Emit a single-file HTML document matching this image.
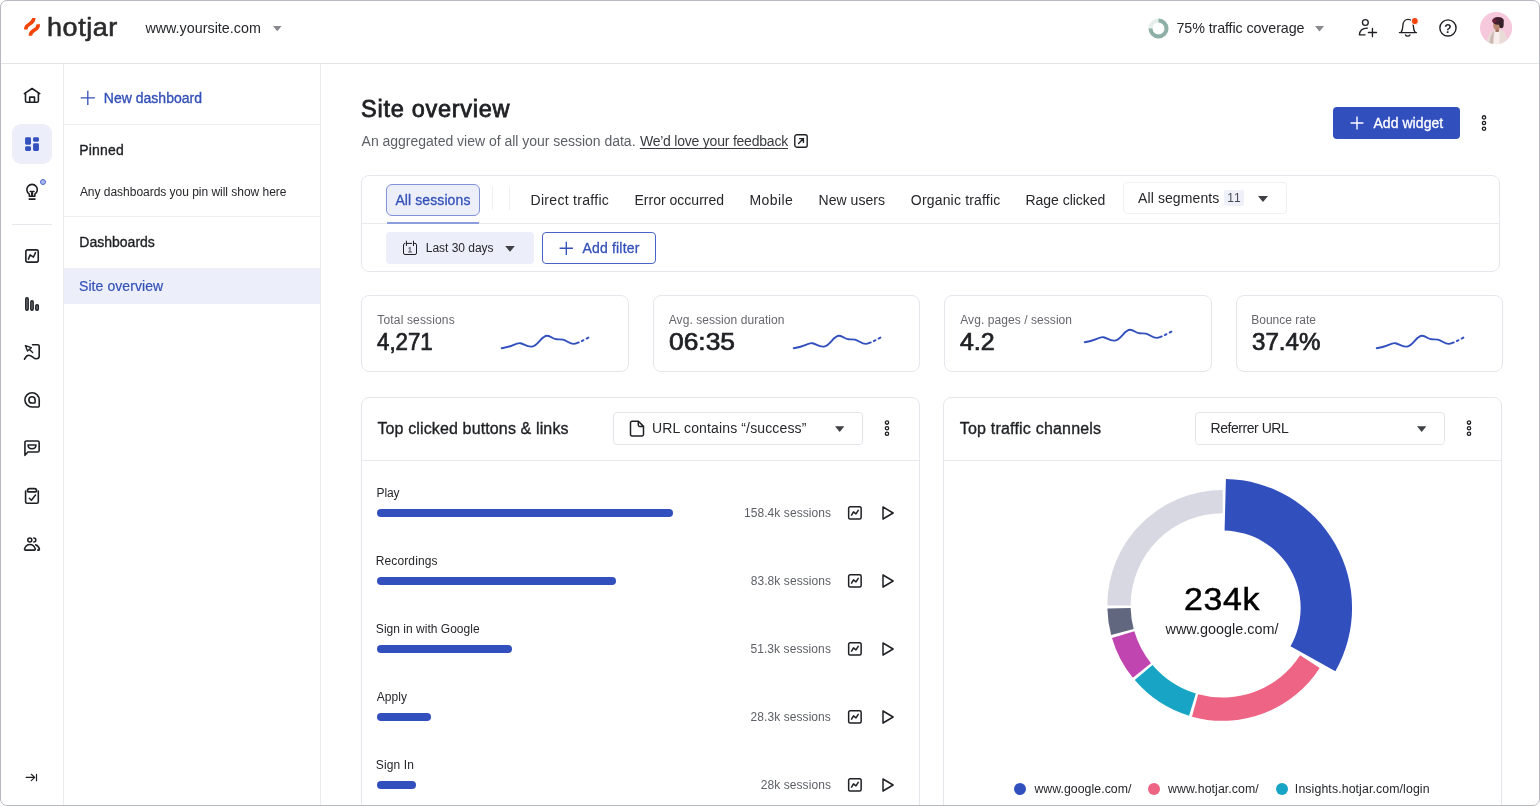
<!DOCTYPE html>
<html lang="en">
<head>
<meta charset="utf-8">
<title>Hotjar – Site overview</title>
<style>
*{box-sizing:border-box;margin:0;padding:0}
html,body{width:1540px;height:806px;overflow:hidden;background:#fff}
body{font-family:"Liberation Sans",sans-serif;color:#1f2024;font-size:14px;position:relative}
.abs{position:absolute}
.t{position:absolute;white-space:nowrap;line-height:1}
#frame{position:absolute;left:0;top:0;width:1540px;height:806px;border:1px solid #b7b8c2;border-radius:7px;pointer-events:none;z-index:50}
.hline{position:absolute;height:1px;background:#e5e6ea}
.vline{position:absolute;width:1px;background:#e9eaee}
.card{position:absolute;border:1px solid #e4e7eb;border-radius:8px;background:#fff}
svg{position:absolute;overflow:visible}
.ic{fill:none;stroke:#1f2024;stroke-linecap:round;stroke-linejoin:round}
.blue{color:#3451b8}
.grey{color:#5d5f66}
.bar{position:absolute;height:8px;border-radius:4px;background:#324fbe;left:376.700px}
.lbl{font-size:12px;color:#26272b}
.tab{font-size:14px;color:#26272b}
.st{font-size:12px;color:#66676d}
.num{font-size:23px;color:#1f2024;transform-origin:0 50%;-webkit-text-stroke:0.7px #1f2024}
.wt{font-size:16px;color:#1f2024;-webkit-text-stroke:0.35px #1f2024}
.lg{font-size:12.3px;color:#26272b}
.ses{font-size:12px;color:#5d5f66}
</style>
</head>
<body>
<div id="wrap" style="position:absolute;left:0;top:0;width:1540px;height:806px;will-change:transform">
<!-- HEADER -->
<div class="hline" style="left:0;top:63px;width:1540px"></div>
<svg style="left:23px;top:17px" width="18" height="20" viewBox="0 0 18 20"><g fill="none" stroke="#f4440b" stroke-width="3.6" stroke-linecap="butt"><path d="M2.7 12.4 C2.7 5.6 10.8 8.4 10.8 1"/><path d="M7.4 18.7 C7.4 11.800 15.3 14.600 15.3 7.200"/></g></svg>
<div class="t" id="logo" style="left:46.7px;top:15.6px;font-size:24px;letter-spacing:0.5px;transform:scale(1.1245,1.045);transform-origin:0 84.6%;color:#2b2b2d;-webkit-text-stroke:0.55px #2b2b2d">hotjar</div>
<div class="t" id="site" style="left:145.39px;top:20.60px;font-size:14.3px;color:#26272b;letter-spacing:0.015px">www.yoursite.com</div>
<svg style="left:272.800px;top:26px" width="8.600" height="5.400" viewBox="0 0 10 6"><path d="M0 0h10L5 6z" fill="#88898f"/></svg>
<svg style="left:1148px;top:18px" width="21" height="21" viewBox="0 0 21 21"><circle cx="10.5" cy="10.5" r="8" fill="none" stroke="#e4efec" stroke-width="4"/><path d="M10.5 2.5 A8 8 0 1 1 2.5 10.5" fill="none" stroke="#8fb0a8" stroke-width="4"/></svg>
<div class="t" id="cov" style="left:1176.54px;top:21.15px;font-size:14.3px;color:#26272b;letter-spacing:-0.113px">75% traffic coverage</div>
<svg style="left:1315.300px;top:26px" width="9" height="5.400" viewBox="0 0 10 6"><path d="M0 0h10L5 6z" fill="#88898f"/></svg>
<svg style="left:1357px;top:18px" width="21" height="21" viewBox="0 0 21 21" class="ic" stroke-width="1.35"><circle cx="8.350" cy="4.500" r="2.900"/><path d="M10.500 10.100 C5.200 10 2.700 12.800 2.400 16.800 H8.100"/><path d="M15.450 10.400v8.100M11.400 14.450h8.100"/></svg>
<svg style="left:1398px;top:17px" width="21" height="23" viewBox="0 0 21 23" class="ic" stroke-width="1.35"><path d="M1.400 15.600 H18.500 M3.100 15.400 C4.500 13.400 4.800 11 4.900 8.500 C5 4.600 7.400 2.300 10.100 2.300 C12.800 2.300 15.200 4.600 15.300 8.500 C15.400 11 15.700 13.400 17.100 15.400"/><path d="M7.500 17.900 C8.200 19.500 11.200 19.500 11.900 17.900"/><circle cx="16.850" cy="4.070" r="3.600" fill="#f4440b" stroke="#fff" stroke-width="1"/></svg>
<svg style="left:1438px;top:18px" width="20" height="20" viewBox="0 0 20 20"><circle cx="9.970" cy="9.930" r="8.100" fill="none" stroke="#1f2024" stroke-width="1.400"/><text x="10" y="14.700" text-anchor="middle" font-family="Liberation Sans, sans-serif" font-weight="700" font-size="12" fill="#1f2024">?</text></svg>
<svg style="left:1479.700px;top:11.700px" width="32.200" height="32.200" viewBox="0 0 32 32"><defs><clipPath id="av"><circle cx="16" cy="16" r="16"/></clipPath></defs><g clip-path="url(#av)"><rect width="32" height="32" fill="#f6c8dc"/><path d="M6.600 32 C7 24.500 10.500 19 14.800 17.600 L20.800 17.600 C25 19 27.200 24.500 27.600 32 Z" fill="#e9dcd7"/><path d="M14.600 19.500 L19.600 19.500 L19.200 32 L13.600 32 Z" fill="#f9eeee"/><path d="M9.500 32 C9.500 26 11.500 21 14 19 L12.800 32 Z" fill="#cbb9b4"/><rect x="15.400" y="15" width="3.400" height="4.800" fill="#a06f5e"/><ellipse cx="16.700" cy="13.300" rx="3.500" ry="4.200" fill="#bb8873"/><ellipse cx="18" cy="8.800" rx="5.700" ry="3.900" fill="#40202c"/><ellipse cx="21.300" cy="12" rx="2.300" ry="4.200" fill="#35202a"/><ellipse cx="14.400" cy="8.600" rx="2.200" ry="2" fill="#6a2138"/></g></svg>
<!-- LEFT RAIL -->
<div class="vline" style="left:63px;top:64px;height:742px"></div>
<div class="abs" style="left:12px;top:124px;width:40px;height:40px;border-radius:9px;background:#eceffa"></div>
<div class="hline" style="left:12px;top:224px;width:40px;background:#e8e9ee"></div>
<!-- home -->
<svg style="left:22px;top:86px" width="20" height="20" viewBox="0 0 20 20" class="ic" stroke-width="1.6" stroke="#1f2238"><path d="M2.400 7.600 L10.080 2.500 L17.760 7.600"/><path d="M3.500 7.200 V14.800 a1.500 1.500 0 0 0 1.500 1.500 H14.900 a1.500 1.500 0 0 0 1.500-1.500 V7.200"/><path d="M7.700 16.200 V11.100 H12.500 V16.200"/></svg>
<!-- dashboards -->
<svg style="left:22px;top:134px" width="20" height="20" viewBox="0 0 20 20" fill="#3350be"><rect x="3.100" y="3.200" width="5.900" height="7.500" rx="1.350"/><rect x="11.100" y="3.200" width="5.850" height="4.500" rx="1.350"/><rect x="3.100" y="12.200" width="5.900" height="4.750" rx="1.350"/><rect x="11.100" y="9.200" width="5.850" height="7.750" rx="1.350"/></svg>
<!-- bulb -->
<svg style="left:22px;top:181px" width="20" height="22" viewBox="0 0 20 22" class="ic" stroke-width="1.6"><path d="M7.300 15.300 V13.100 A5.250 5.250 0 1 1 12.860 13.100 V15.300 Z"/><path d="M7.200 18.100h5.800"/><path d="M8.200 10.600 h3.800 M10.080 10.800 V15" stroke-width="1.500"/><path d="M10.080 11.500 V15" stroke-width="2.200" stroke-linecap="butt"/></svg>
<div class="abs" style="left:39.900px;top:178.900px;width:6.100px;height:6.100px;border-radius:50%;background:#aab7ee;border:1px solid #5069cb"></div>
<!-- trends -->
<svg style="left:22px;top:246px" width="20" height="20" viewBox="0 0 20 20" class="ic" stroke-width="1.6"><rect x="3.850" y="3.850" width="12.400" height="12.300" rx="1.900"/><path d="M6.400 13.100 L8.100 8.800 L11.450 11.150 L13.500 6.650" stroke-width="1.500"/></svg>
<!-- funnels/bars -->
<svg style="left:22px;top:294px" width="20" height="20" viewBox="0 0 20 20" class="ic" stroke-width="1.5" fill="#9a9aa0"><rect x="3.800" y="3.800" width="2.350" height="12.400" rx="1.170" fill="#9a9aa0"/><rect x="8.840" y="6.850" width="2.300" height="9.350" rx="1.150" fill="#9a9aa0"/><rect x="13.800" y="10.830" width="2.480" height="5.370" rx="1.200" fill="#9a9aa0"/></svg>
<!-- heatmaps -->
<svg style="left:22px;top:342px" width="20" height="20" viewBox="0 0 20 20" class="ic" stroke-width="1.6"><path d="M10.500 2.800 H15.700 a1.500 1.500 0 0 1 1.500 1.500 V14 C17.200 16.200 15.600 16.800 14.200 16.800 C11.500 16.800 10 13.200 6.800 13.200 C4.800 13.200 3.500 15 2.500 17.200"/><path d="M3.400 3.600 L9.300 5.700 L5.500 9.100 Z M7.500 7.500 L10.600 10.400" stroke-width="1.400"/></svg>
<!-- recordings (@) -->
<svg style="left:22px;top:390px" width="20" height="20" viewBox="0 0 20 20" class="ic" stroke-width="1.6"><path d="M10.080 17.030 A7.150 7.150 0 1 1 17.230 9.880 V15.600 a1.400 1.400 0 0 1-1.400 1.430 Z"/><path d="M10 12.960 A3.080 3.080 0 1 1 13.080 9.880 V12.200 a0.800 0.800 0 0 1-0.800 0.760 Z"/></svg>
<!-- feedback -->
<svg style="left:22px;top:438px" width="20" height="20" viewBox="0 0 20 20" class="ic" stroke-width="1.6"><path d="M2.930 17.300 V4.430 a1.500 1.500 0 0 1 1.500-1.500 H15.640 a1.500 1.500 0 0 1 1.500 1.500 V12.470 a1.500 1.500 0 0 1-1.500 1.500 H5.900 Z"/><path d="M6 7.100 H14 C14 12 6 12 6 7.100 Z" stroke-width="1.500"/></svg>
<!-- surveys -->
<svg style="left:22px;top:486px" width="20" height="20" viewBox="0 0 20 20" class="ic" stroke-width="1.6"><path d="M3.600 5.100 V15.700 a1.500 1.500 0 0 0 1.500 1.500 H14.800 a1.500 1.500 0 0 0 1.500-1.500 V5.100"/><path d="M7.600 2.600 H12.400 C13.600 2.600 14.600 3.800 14.600 4.900 C14.600 5.600 14.200 5.900 13.600 5.900 H6.400 C5.800 5.900 5.400 5.600 5.400 4.900 C5.400 3.800 6.400 2.600 7.600 2.600 Z"/><path d="M7.300 12.250 L9.400 14.300 L13.500 9" stroke-width="1.500"/></svg>
<!-- users -->
<svg style="left:22px;top:534px" width="20" height="20" viewBox="0 0 20 20" class="ic" stroke-width="1.55"><circle cx="7.800" cy="5.900" r="2"/><path d="M3.300 16.100 C2.600 16.100 2.400 15.500 2.600 14.800 C3.400 12.200 5.400 10.500 7.900 10.500 C10.400 10.500 12.400 12.200 13.200 14.800 C13.400 15.500 13.200 16.100 12.500 16.100 Z"/><path d="M11.800 3.900 A2 2 0 0 1 11.800 7.900"/><path d="M13.600 10.800 C15.600 11.600 17 13.200 17.400 15.200 C17.500 15.800 17.200 16.100 16.600 16.100 H15.600"/></svg>
<!-- collapse -->
<svg style="left:25px;top:771px" width="14" height="12" viewBox="0 0 14 12" class="ic" stroke-width="1.2"><path d="M1.200 6.400 H9.600 M6.300 3.300 L9.700 6.400 L6.300 9.600 M11.500 3.300 V9.700"/></svg>
<!-- SIDEBAR -->
<div class="vline" style="left:320px;top:64px;height:742px"></div>
<svg style="left:80px;top:90.100px" width="16" height="16" viewBox="0 0 16 16"><path d="M7.800 0.800v14.200M0.700 7.900h14.200" stroke="#3451b8" stroke-width="1.300" fill="none"/></svg>
<div class="t blue" id="newd" style="left:103.76px;top:90.75px;font-size:14px;-webkit-text-stroke:0.35px #3451b8;letter-spacing:0.017px">New dashboard</div>
<div class="hline" style="left:64px;top:124px;width:256px;background:#eceef2"></div>
<div class="t" id="pinned" style="left:79.32px;top:142.96px;font-size:14px;-webkit-text-stroke:0.35px #1f2024;letter-spacing:0.182px">Pinned</div>
<div class="t" id="anyd" style="left:79.89px;top:185.74px;font-size:12px;color:#26272b;letter-spacing:-0.023px">Any dashboards you pin will show here</div>
<div class="hline" style="left:64px;top:216px;width:256px;background:#eceef2"></div>
<div class="t" id="dashs" style="left:79.32px;top:235.05px;font-size:14px;-webkit-text-stroke:0.35px #1f2024;letter-spacing:0.008px">Dashboards</div>
<div class="abs" style="left:64px;top:268px;width:256px;height:36px;background:#eceffa"></div>
<div class="t blue" id="sov" style="left:79.00px;top:278.96px;font-size:14px;letter-spacing:0.081px;-webkit-text-stroke:0.2px #3451b8">Site overview</div>
<!-- MAIN -->
<div class="t" id="title" style="left:361.10px;top:98.41px;font-size:23.5px;letter-spacing:0.725px;color:#1f2024;-webkit-text-stroke:0.8px #1f2024">Site overview</div>
<div class="t" id="sub" style="left:361.62px;top:134.46px;font-size:14px;color:#5d5f66;letter-spacing:-0.019px">An aggregated view of all your session data.</div>
<div class="t" id="fb" style="left:639.92px;top:134.46px;font-size:14px;color:#3a3b41;text-decoration:underline;text-underline-offset:2px;text-decoration-thickness:1px;letter-spacing:-0.217px">We’d love your feedback</div>
<svg style="left:794px;top:134px" width="14" height="14" viewBox="0 0 14 14" class="ic" stroke-width="1.400"><rect x="0.800" y="0.800" width="12.400" height="12.400" rx="2"/><path d="M4.600 9.400 L9.400 4.600 M5.600 4.600 h3.800 v3.800"/></svg>
<div class="abs" style="left:1333px;top:107px;width:127px;height:32px;border-radius:4px;background:#324fbe"></div>
<svg style="left:1350px;top:116px" width="14" height="14" viewBox="0 0 14 14"><path d="M7 0.600v12.800M0.600 7h12.800" stroke="#fff" stroke-width="1.400" fill="none"/></svg>
<div class="t" id="addw" style="left:1373.41px;top:115.96px;font-size:14px;color:#fff;-webkit-text-stroke:0.3px #fff;letter-spacing:0.059px">Add widget</div>
<svg style="left:1480px;top:114px" width="8" height="18" viewBox="0 0 8 18" fill="none" stroke="#1f2024" stroke-width="1.300"><circle cx="4" cy="3.400" r="1.650"/><circle cx="4" cy="9" r="1.650"/><circle cx="4" cy="14.700" r="1.650"/></svg>

<!-- filter card -->
<div class="card" style="left:361px;top:175px;width:1139px;height:97px"></div>
<div class="hline" style="left:362px;top:223px;width:1137px;background:#e8eaee"></div>
<div class="abs" style="left:386px;top:183.5px;width:94px;height:32px;border-radius:6px;background:#eceffa;border:1px solid #8191d8"></div>
<div class="t blue" id="alls" style="left:395.39px;top:192.90px;font-size:14px;-webkit-text-stroke:0.3px #3451b8;letter-spacing:0.100px">All sessions</div>
<div class="abs" style="left:387px;top:221.7px;width:92px;height:2px;background:#8c9cdd"></div>
<div class="vline" style="left:492px;top:187px;height:23px;background:#eceef1"></div>
<div class="vline" style="left:509px;top:187px;height:23px;background:#eceef1"></div>
<div class="t tab" id="tb1" style="left:530.57px;top:192.90px;letter-spacing:0.295px">Direct traffic</div>
<div class="t tab" id="tb2" style="left:634.46px;top:192.90px;letter-spacing:0.013px">Error occurred</div>
<div class="t tab" id="tb3" style="left:749.46px;top:192.90px;letter-spacing:0.422px">Mobile</div>
<div class="t tab" id="tb4" style="left:818.46px;top:192.90px;letter-spacing:0.063px">New users</div>
<div class="t tab" id="tb5" style="left:910.82px;top:192.90px;letter-spacing:0.180px">Organic traffic</div>
<div class="t tab" id="tb6" style="left:1025.57px;top:192.90px;letter-spacing:-0.049px">Rage clicked</div>
<div class="abs" style="left:1122.5px;top:182px;width:164.500px;height:31.500px;border-radius:4px;border:1px solid #eff0f3"></div>
<div class="t tab" id="tb7" style="left:1138.08px;top:191.15px;letter-spacing:0.093px">All segments</div>
<div class="abs" style="left:1224.2px;top:190.2px;width:19.800px;height:15.400px;border-radius:2px;background:#eff1fa"></div>
<div class="t" id="n11" style="left:1227.31px;top:192.10px;font-size:12px;color:#4a4b52;letter-spacing:0.846px">11</div>
<svg style="left:1258px;top:196px" width="10" height="6" viewBox="0 0 10 6"><path d="M0 0h10L5 6z" fill="#3f4046"/></svg>

<div class="abs" style="left:386px;top:232px;width:148px;height:32px;border-radius:4px;background:#eceffa"></div>
<svg style="left:402px;top:240px" width="16" height="16" viewBox="0 0 16 16" class="ic" stroke-width="1"><path d="M3 3.400 a1.500 1.500 0 0 0-1.500 1.500 V13 a1.500 1.500 0 0 0 1.500 1.500 H13 a1.500 1.500 0 0 0 1.500-1.500 V4.900 a1.500 1.500 0 0 0-1.500-1.500 H11.500 M4.400 3.400 H9.700 M4.400 1.100 v4.500 M11.500 1.100 v4.500"/><path d="M7 8.100 L8 7.400 V11.800 M6.500 12 H9.600" stroke="#5a5b63" stroke-width="1.100"/></svg>
<div class="t" id="l30" style="left:425.82px;top:241.85px;font-size:12px;color:#26272b;letter-spacing:-0.033px">Last 30 days</div>
<svg style="left:505px;top:246px" width="10" height="5.800" viewBox="0 0 10 6"><path d="M0 0h10L5 6z" fill="#3f4046"/></svg>
<div class="abs" style="left:542px;top:232px;width:114px;height:32px;border-radius:4px;border:1px solid #4a63c8"></div>
<svg style="left:558.700px;top:241px" width="14.600" height="14.600" viewBox="0 0 14 14"><path d="M7 0.600v12.800M0.600 7h12.800" stroke="#3451b8" stroke-width="1.300" fill="none"/></svg>
<div class="t blue" id="addf" style="left:582.39px;top:241.15px;font-size:14px;-webkit-text-stroke:0.3px #3451b8;letter-spacing:0.200px">Add filter</div>

<!-- stat cards -->
<div class="card" style="left:361px;top:295px;width:268px;height:77px"></div>
<div class="card" style="left:652.500px;top:295px;width:267.500px;height:77px"></div>
<div class="card" style="left:944px;top:295px;width:267.500px;height:77px"></div>
<div class="card" style="left:1235.500px;top:295px;width:267.500px;height:77px"></div>
<div class="t st" id="s1" style="left:377.35px;top:313.85px;letter-spacing:0.151px">Total sessions</div>
<div class="t st" id="s2" style="left:668.78px;top:313.85px;letter-spacing:0.058px">Avg. session duration</div>
<div class="t st" id="s3" style="left:960.28px;top:313.85px;letter-spacing:0.066px">Avg. pages / session</div>
<div class="t st" id="s4" style="left:1251.29px;top:313.85px;letter-spacing:-0.006px">Bounce rate</div>
<div class="t num" id="n1" style="left:377.4px;top:330.5px;transform:scaleX(0.968)">4,271</div>
<div class="t num" id="n2" style="left:668.96px;top:330.5px;transform:scaleX(1.146)">06:35</div>
<div class="t num" id="n3" style="left:960.42px;top:330.5px;transform:scaleX(1.084)">4.2</div>
<div class="t num" id="n4" style="left:1251.57px;top:330.5px;transform:scaleX(1.05)">37.4%</div>
<svg style="left:500px;top:331px" width="92" height="22" viewBox="0 0 92 22" class="spark"><use href="#spk"/></svg>
<svg style="left:791.500px;top:331px" width="92" height="22" viewBox="0 0 92 22" class="spark"><use href="#spk"/></svg>
<svg style="left:1083px;top:325px" width="92" height="22" viewBox="0 0 92 22" class="spark"><use href="#spk"/></svg>
<svg style="left:1374.500px;top:331px" width="92" height="22" viewBox="0 0 92 22" class="spark"><use href="#spk"/></svg>
<svg width="0" height="0" style="left:0;top:0"><defs><g id="spk" fill="none" stroke="#324fbe" stroke-width="1.900" stroke-linecap="round"><path d="M1.700 17.200 C6 16.500 9 15.800 12.500 14.300 C16 12.800 18 11.700 20.500 12.200 C24 12.900 27 16.300 32 15.600 C38 14.800 41.500 4.600 47.200 4.800 C51 4.900 52.500 8 56.500 8.300 C59 8.500 60.500 8.100 63 8.700 C67 9.700 70 13.200 74 12.900 C76 12.700 77.500 12 78.800 11.400"/><path d="M81.800 10.100 L83.500 9.200"/><path d="M86.600 7.600 L88.400 6.600"/></g></defs></svg>
<!-- widgets -->
<svg width="0" height="0" style="left:0;top:0"><defs><g id="trd"><rect x="1.650" y="1.750" width="12.500" height="12.200" rx="1.500"/><path d="M4.600 10.100 L6.500 6.900 L9 8.900 L11.200 5.300"/></g><g id="ply"><path d="M4 2 L14.100 8 L4 14 z"/></g><g id="kb" fill="none" stroke="#1f2024" stroke-width="1.300"><circle cx="4" cy="2.600" r="1.650"/><circle cx="4" cy="8.200" r="1.650"/><circle cx="4" cy="13.800" r="1.650"/></g></defs></svg>
<div class="card" style="left:361px;top:396.5px;width:559px;height:420px"></div>
<div class="card" style="left:943px;top:396.5px;width:559px;height:420px"></div>
<div class="hline" style="left:362px;top:460px;width:557px;background:#e8eaee"></div>
<div class="hline" style="left:944px;top:460px;width:557px;background:#e8eaee"></div>
<div class="t wt" id="w1" style="left:377.46px;top:420.91px;letter-spacing:0.131px">Top clicked buttons &amp; links</div>
<div class="t wt" id="w2" style="left:959.83px;top:420.91px;letter-spacing:0.195px">Top traffic channels</div>
<div class="abs" style="left:613px;top:412px;width:250px;height:33px;border-radius:4px;border:1px solid #e3e5ea"></div>
<svg style="left:629px;top:420px" width="16" height="17" viewBox="0 0 16 17" class="ic" stroke-width="1.500"><path d="M3 1.300 h6.400 L14.500 6.400 v8 a1.500 1.500 0 0 1-1.500 1.500 H3 a1.500 1.500 0 0 1-1.500-1.500 V2.800 a1.500 1.500 0 0 1 1.500-1.500z M9.300 1.500v3.600 a1.300 1.300 0 0 0 1.300 1.300 h3.700"/></svg>
<div class="t tab" id="d1" style="left:652.10px;top:421.46px;letter-spacing:0.138px">URL contains “/success”</div>
<svg style="left:834.500px;top:425.700px" width="9.400" height="6.200" viewBox="0 0 10 6"><path d="M0 0h10L5 6z" fill="#3f4046"/></svg>
<svg style="left:883px;top:420px" width="8" height="16" viewBox="0 0 8 16"><use href="#kb"/></svg>
<div class="abs" style="left:1195px;top:412px;width:250px;height:33px;border-radius:4px;border:1px solid #e3e5ea"></div>
<div class="t tab" id="d2" style="left:1210.57px;top:421.46px;letter-spacing:-0.460px">Referrer URL</div>
<svg style="left:1416.500px;top:425.700px" width="9.400" height="6.200" viewBox="0 0 10 6"><path d="M0 0h10L5 6z" fill="#3f4046"/></svg>
<svg style="left:1465px;top:420px" width="8" height="16" viewBox="0 0 8 16"><use href="#kb"/></svg>
<div class="t lbl" id="r0" style="left:376.47px;top:486.65px;letter-spacing:-0.069px">Play</div>
<div class="bar" style="top:509px;width:296px"></div>
<div class="t ses" id="v0" style="right:708.92px;top:506.85px;letter-spacing:0.070px">158.4k sessions</div>
<svg style="left:847px;top:505px" width="16" height="16" viewBox="0 0 16 16" class="ic" stroke-width="1.500"><use href="#trd"/></svg>
<svg style="left:879px;top:505px" width="16" height="16" viewBox="0 0 16 16" class="ic" stroke-width="1.500"><use href="#ply"/></svg>
<div class="t lbl" id="r1" style="left:375.75px;top:554.65px;letter-spacing:0.120px">Recordings</div>
<div class="bar" style="top:577px;width:239px"></div>
<div class="t ses" id="v1" style="right:708.83px;top:574.85px;letter-spacing:0.078px">83.8k sessions</div>
<svg style="left:847px;top:573px" width="16" height="16" viewBox="0 0 16 16" class="ic" stroke-width="1.500"><use href="#trd"/></svg>
<svg style="left:879px;top:573px" width="16" height="16" viewBox="0 0 16 16" class="ic" stroke-width="1.500"><use href="#ply"/></svg>
<div class="t lbl" id="r2" style="left:375.86px;top:622.65px;letter-spacing:0.019px">Sign in with Google</div>
<div class="bar" style="top:645px;width:135px"></div>
<div class="t ses" id="v2" style="right:709.04px;top:642.85px;letter-spacing:0.083px">51.3k sessions</div>
<svg style="left:847px;top:641px" width="16" height="16" viewBox="0 0 16 16" class="ic" stroke-width="1.500"><use href="#trd"/></svg>
<svg style="left:879px;top:641px" width="16" height="16" viewBox="0 0 16 16" class="ic" stroke-width="1.500"><use href="#ply"/></svg>
<div class="t lbl" id="r3" style="left:376.66px;top:690.65px;letter-spacing:0.056px">Apply</div>
<div class="bar" style="top:713px;width:54px"></div>
<div class="t ses" id="v3" style="right:709.05px;top:710.85px;letter-spacing:0.075px">28.3k sessions</div>
<svg style="left:847px;top:709px" width="16" height="16" viewBox="0 0 16 16" class="ic" stroke-width="1.500"><use href="#trd"/></svg>
<svg style="left:879px;top:709px" width="16" height="16" viewBox="0 0 16 16" class="ic" stroke-width="1.500"><use href="#ply"/></svg>
<div class="t lbl" id="r4" style="left:375.86px;top:758.65px;letter-spacing:0.114px">Sign In</div>
<div class="bar" style="top:781px;width:39px"></div>
<div class="t ses" id="v4" style="right:709.04px;top:778.85px;letter-spacing:0.081px">28k sessions</div>
<svg style="left:847px;top:777px" width="16" height="16" viewBox="0 0 16 16" class="ic" stroke-width="1.500"><use href="#trd"/></svg>
<svg style="left:879px;top:777px" width="16" height="16" viewBox="0 0 16 16" class="ic" stroke-width="1.500"><use href="#ply"/></svg>
<svg style="left:0;top:0" width="1540" height="806" viewBox="0 0 1540 806"><path d="M1225.9 478.9 A129 129 0 0 1 1335.4 671.3 L1290.5 646.3 A77.4 77.4 0 0 0 1224.6 530.6 Z" fill="#324fbe"/><path d="M1319.70 667.91 A115.4 115.4 0 0 1 1191.96 716.63 L1198.16 694.17 A92.1 92.1 0 0 0 1300.12 655.29 Z" fill="#ee6484"/><path d="M1189.06 715.79 A115.4 115.4 0 0 1 1134.75 680.12 L1152.51 665.03 A92.1 92.1 0 0 0 1195.85 693.50 Z" fill="#18a5c5"/><path d="M1132.83 677.79 A115.4 115.4 0 0 1 1111.97 637.89 L1134.32 631.33 A92.1 92.1 0 0 0 1150.97 663.17 Z" fill="#c045b1"/><path d="M1111.15 634.98 A115.4 115.4 0 0 1 1107.34 608.62 L1130.64 607.97 A92.1 92.1 0 0 0 1133.68 629.00 Z" fill="#61677f"/><path d="M1107.30 605.40 A115.4 115.4 0 0 1 1222.70 490.00 L1222.70 513.30 A92.1 92.1 0 0 0 1130.60 605.40 Z" fill="#d7d8e1"/></svg>
<div class="t" id="c1" style="left:1122.1px;top:583.8px;width:200px;text-align:center;font-size:31px;letter-spacing:0.6px;transform:scaleX(1.093);color:#000;-webkit-text-stroke:0.5px #000">234k</div>
<div class="t" id="c2" style="left:1122px;top:621.82px;width:200px;text-align:center;font-size:14.4px;color:#1f2024;letter-spacing:0.009px">www.google.com/</div>
<div class="abs" style="left:1014px;top:783px;width:12px;height:12px;border-radius:50%;background:#324fbe"></div>
<div class="abs" style="left:1148px;top:783px;width:12px;height:12px;border-radius:50%;background:#ee6484"></div>
<div class="abs" style="left:1276px;top:783px;width:12px;height:12px;border-radius:50%;background:#18a5c5"></div>
<div class="t lg" id="g1" style="left:1034.40px;top:782.79px;letter-spacing:0.047px">www.google.com/</div>
<div class="t lg" id="g2" style="left:1168.09px;top:782.79px;letter-spacing:0.081px">www.hotjar.com/</div>
<div class="t lg" id="g3" style="left:1294.86px;top:782.79px;letter-spacing:0.114px">Insights.hotjar.com/login</div>
<div id="frame"></div>
</div>
</body>
</html>
